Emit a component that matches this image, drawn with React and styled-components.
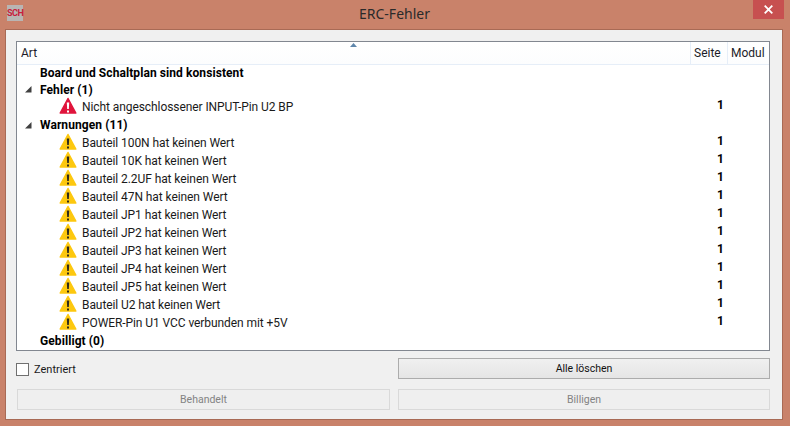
import React from "react"
import styled, { createGlobalStyle } from "styled-components"

const Global = createGlobalStyle`
  html, body { margin: 0; padding: 0; background: #c9826a; }
  body { font-family: Roboto, "Noto Sans", sans-serif; font-size: 12px; color: #000; }
`

const Win = styled.div`
  width: 790px;
  height: 426px;
  box-sizing: border-box;
  background: #c9826a;
  padding: 0 7px 6px 5px;
  display: flex;
  flex-direction: column;
  overflow: hidden;
`

const TitleBar = styled.div`
  height: 29px;
  flex: none;
  display: grid;
  grid-template-columns: 1fr auto 1fr;
  margin-right: -1px;
`

const AppIcon = styled.div`
  width: 16px;
  height: 16px;
  margin: 5px 0 0 2px;
  background: #b9b5b3;
  color: #c8203c;
  font-size: 9px;
  font-weight: 700;
  line-height: 16px;
  text-align: center;
  letter-spacing: -0.5px;
`

const Title = styled.div`
  font-family: "Noto Sans", sans-serif;
  font-size: 14px;
  line-height: 27px;
  color: #2a2a2a;
`

const CloseBtn = styled.div`
  justify-self: end;
  width: 31px;
  height: 19px;
  background: #c75050;
  display: flex;
  align-items: center;
  justify-content: center;
`

const Client = styled.div`
  flex: 1;
  background: #f0f0f0;
  border: 1px solid #a86a55;
  padding: 11px 12px 11px 10px;
  display: flex;
  flex-direction: column;
  min-height: 0;
`

const List = styled.div`
  height: 310px;
  flex: none;
  box-sizing: border-box;
  background: #fff;
  border: 1px solid #828790;
`

const Head = styled.div`
  height: 22px;
  display: grid;
  grid-template-columns: 1fr 37px 42px;
  position: relative;
  background: linear-gradient(#fff, #fcfdfe);
  border-bottom: 1px solid #e6eef8;
`

const HeadCell = styled.div`
  padding-left: ${p => (p.$sep ? 3 : 4)}px;
  line-height: 22px;
  color: #1c1c28;
  ${p => p.$sep && "border-left: 1px solid #e6eef8;"}
`

const SortArrow = styled.svg`
  position: absolute;
  left: 333px;
  top: 1px;
`

const RowWrap = styled.div`
  height: ${p => p.$h || 18}px;
  display: grid;
  grid-template-columns: 1fr 37px 42px;
  align-items: center;
`

const Label = styled.div`
  display: flex;
  align-items: center;
  padding-left: ${p => (p.$item ? 42 : 8)}px;
  white-space: nowrap;
  font-weight: ${p => (p.$bold ? 700 : 400)};
  letter-spacing: ${p => (p.$bold ? 0.08 : -0.08)}px;
  color: ${p => (p.$bold ? "#000" : "#1a1a1a")};
`

const Twisty = styled.svg`
  width: 7px;
  height: 7px;
  margin-right: 8px;
  flex: none;
`

const TwistySpace = styled.span`
  width: 15px;
  flex: none;
`

const RowIcon = styled.svg`
  width: 18px;
  height: 18px;
  margin: -2px 5px 0 0;
  flex: none;
`

const Page = styled.div`
  font-weight: 700;
  text-align: right;
  padding-right: 3px;
  position: relative;
  top: -2px;
`

const Controls = styled.div`
  display: grid;
  grid-template-columns: 374px 372px;
  column-gap: 8px;
  row-gap: 8px;
  margin-top: 7px;
  font-size: 11px;
`

const CheckLabel = styled.label`
  display: flex;
  align-items: center;
  gap: 5px;
  color: #1a1a1a;
  line-height: 23px;
`

const Box = styled.span`
  width: 11px;
  height: 11px;
  border: 1px solid #707070;
  background: #fff;
`

const Btn = styled.div`
  height: 21px;
  box-sizing: border-box;
  margin-left: ${p => (p.$first ? 1 : 0)}px;
  display: flex;
  align-items: center;
  justify-content: center;
  font-size: 10.5px;
  border: 1px solid ${p => (p.disabled ? "#d9d9d9" : "#acacac")};
  background: ${p => (p.disabled ? "#efefef" : "linear-gradient(#f0f0f0, #e5e5e5)")};
  color: ${p => (p.disabled ? "#838383" : "#111")};
`

const Warn = () => (
  <RowIcon viewBox="0 0 18 18">
    <path d="M9 1.5 L16.8 16 H1.2 Z" fill="#fdc80f" stroke="#fdc80f" strokeWidth="1.5" strokeLinejoin="round" />
    <path d="M7.8 5.5h2.4l-.4 6.5h-1.6z" fill="#2e2a1a" />
    <path d="M8 13.5h2v2h-2z" fill="#2e2a1a" />
  </RowIcon>
)

const Err = () => (
  <RowIcon viewBox="0 0 18 18">
    <path d="M9 1.5 L16.8 16 H1.2 Z" fill="#e0143c" stroke="#e0143c" strokeWidth="1.5" strokeLinejoin="round" />
    <path d="M7.8 5.5h2.4l-.4 6.5h-1.6z" fill="#fff" />
    <path d="M8 13.5h2v2h-2z" fill="#fff" />
  </RowIcon>
)

const warnings = [
  "Bauteil 100N hat keinen Wert",
  "Bauteil 10K hat keinen Wert",
  "Bauteil 2.2UF hat keinen Wert",
  "Bauteil 47N hat keinen Wert",
  "Bauteil JP1 hat keinen Wert",
  "Bauteil JP2 hat keinen Wert",
  "Bauteil JP3 hat keinen Wert",
  "Bauteil JP4 hat keinen Wert",
  "Bauteil JP5 hat keinen Wert",
  "Bauteil U2 hat keinen Wert",
  "POWER-Pin U1 VCC verbunden mit +5V",
]

const Group = ({ text, open, h }) => (
  <RowWrap $h={h}>
    <Label $bold>
      {open ? (
        <Twisty viewBox="0 0 7 7"><path d="M0 6.5 L6.5 6.5 L6.5 0 Z" fill="#404040" /></Twisty>
      ) : (
        <TwistySpace />
      )}
      {text}
    </Label>
  </RowWrap>
)

const Item = ({ icon, text }) => (
  <RowWrap>
    <Label $item>{icon}{text}</Label>
    <Page>1</Page>
  </RowWrap>
)

export default function App() {
  return (
    <Win>
      <Global />
      <TitleBar>
        <AppIcon>SCH</AppIcon>
        <Title>ERC-Fehler</Title>
        <CloseBtn>
          <svg width="9" height="9" viewBox="0 0 9 9">
            <path d="M0.7 0.7 L8.3 8.3 M8.3 0.7 L0.7 8.3" stroke="#fff" strokeWidth="1.8" />
          </svg>
        </CloseBtn>
      </TitleBar>
      <Client>
        <List>
          <Head>
            <HeadCell>Art</HeadCell>
            <HeadCell $sep>Seite</HeadCell>
            <HeadCell $sep>Modul</HeadCell>
            <SortArrow width="7" height="4" viewBox="0 0 7 4">
              <path d="M0 4 L3.5 0 L7 4 Z" fill="#5f86ab" />
            </SortArrow>
          </Head>
          <div>
            <Group text="Board und Schaltplan sind konsistent" h={16} />
            <Group text="Fehler (1)" open h={17} />
            <Item icon={<Err />} text="Nicht angeschlossener INPUT-Pin U2 BP" />
            <Group text="Warnungen (11)" open />
            {warnings.map(w => <Item key={w} icon={<Warn />} text={w} />)}
            <Group text="Gebilligt (0)" />
          </div>
        </List>
        <Controls>
          <CheckLabel><Box />Zentriert</CheckLabel>
          <Btn>Alle löschen</Btn>
          <Btn disabled $first>Behandelt</Btn>
          <Btn disabled>Billigen</Btn>
        </Controls>
      </Client>
    </Win>
  )
}
